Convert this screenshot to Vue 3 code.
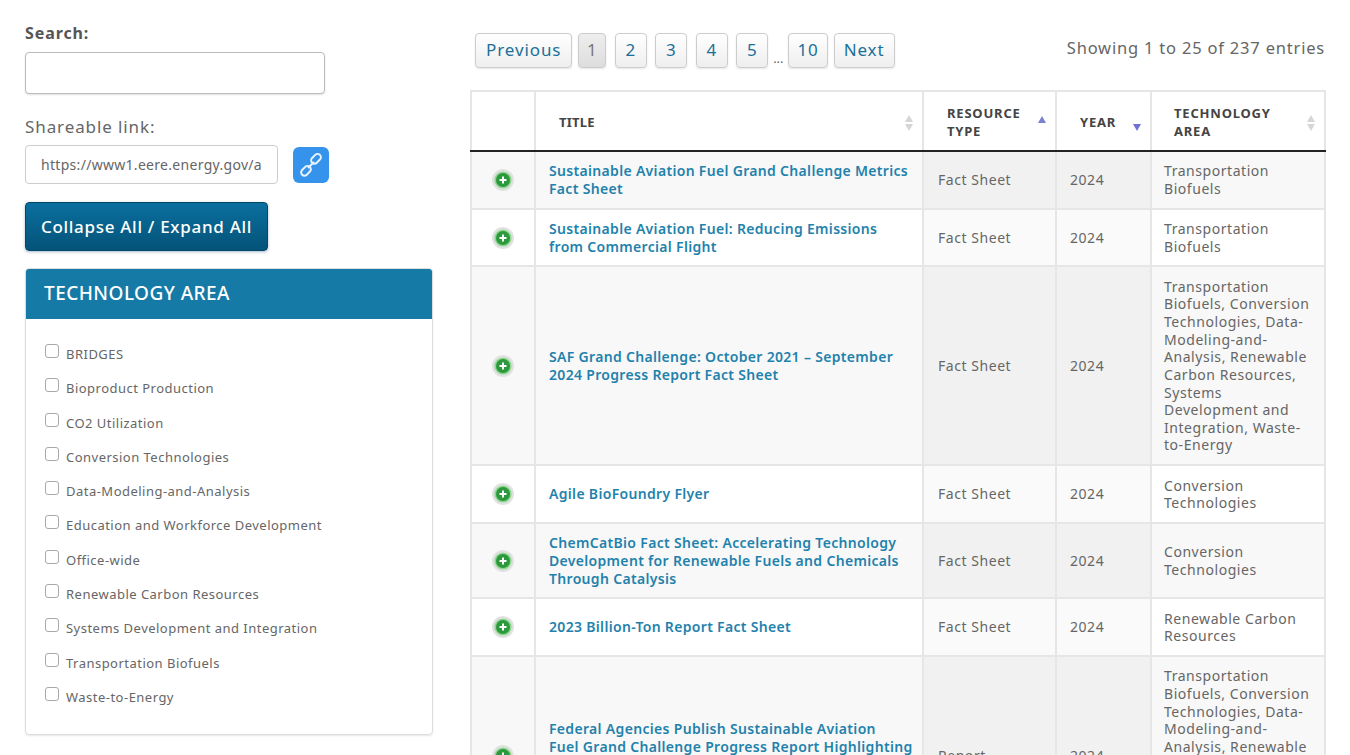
<template>
  <div class="page">
    <aside class="sidebar">
      <label class="search-label" for="search">Search:</label>
      <input id="search" class="search-input" type="text" />

      <label class="share-label" for="share">Shareable link:</label>
      <div class="share-row">
        <input id="share" class="share-input" type="text" value="https://www1.eere.energy.gov/a" readonly />
        <button class="share-button" aria-label="Copy link">
          <svg width="24" height="24" viewBox="0 0 24 24" fill="none" stroke="#e8f3ff" stroke-width="2">
            <rect x="11.5" y="2.5" width="11" height="6.6" rx="3.3" transform="rotate(-45 17 5.8)" />
            <rect x="1.5" y="14.5" width="11" height="6.6" rx="3.3" transform="rotate(-45 7 17.8)" />
            <path d="M9 15l6-6" />
          </svg>
        </button>
      </div>

      <button class="collapse-button">Collapse All / Expand All</button>

      <section class="panel">
        <h3 class="panel-heading">TECHNOLOGY AREA</h3>
        <ul class="filter-list">
          <li v-for="area in areas" :key="area" class="filter-item">
            <input type="checkbox" class="filter-check" />
            <span>{{ area }}</span>
          </li>
        </ul>
      </section>
    </aside>

    <main class="content">
      <div class="toolbar">
        <nav class="pager">
          <a class="page-btn prev">Previous</a>
          <a class="page-btn current">1</a>
          <a class="page-btn">2</a>
          <a class="page-btn">3</a>
          <a class="page-btn">4</a>
          <a class="page-btn">5</a>
          <span class="dots">...</span>
          <a class="page-btn ten">10</a>
          <a class="page-btn next">Next</a>
        </nav>
        <p class="info">Showing 1 to 25 of 237 entries</p>
      </div>

      <table class="results">
        <colgroup>
          <col style="width: 64px" />
          <col style="width: 388px" />
          <col style="width: 133px" />
          <col style="width: 95px" />
          <col style="width: 174px" />
        </colgroup>
        <thead>
          <tr>
            <th></th>
            <th class="th-title">
              <div class="th-inner">
                <span>TITLE</span>
                <svg class="sort" width="10" height="18" viewBox="0 0 10 18">
                  <path d="M5 1l4 7H1z" fill="#d6d6d6" />
                  <path d="M5 17l4-7H1z" fill="#d6d6d6" />
                </svg>
              </div>
            </th>
            <th>
              <div class="th-inner">
                <span>RESOURCE TYPE</span>
                <svg class="sort up" width="10" height="9" viewBox="0 0 10 9">
                  <path d="M5 1l4 7H1z" fill="#7b7fd0" />
                </svg>
              </div>
            </th>
            <th>
              <div class="th-inner">
                <span>YEAR</span>
                <svg class="sort down" width="10" height="9" viewBox="0 0 10 9">
                  <path d="M5 8l4-7H1z" fill="#6f73d6" />
                </svg>
              </div>
            </th>
            <th class="th-area">
              <div class="th-inner">
                <span>TECHNOLOGY AREA</span>
                <svg class="sort" width="10" height="18" viewBox="0 0 10 18">
                  <path d="M5 1l4 7H1z" fill="#d6d6d6" />
                  <path d="M5 17l4-7H1z" fill="#d6d6d6" />
                </svg>
              </div>
            </th>
          </tr>
        </thead>
        <tbody>
          <tr v-for="(row, i) in rows" :key="i" :class="i % 2 === 0 ? 'odd' : 'even'">
            <td class="td-icon">
              <svg width="24" height="24" viewBox="0 0 24 24">
                <circle cx="12" cy="12" r="11" fill="#dfe3df" />
                <circle cx="12" cy="12" r="8.6" fill="#8fd48f" />
                <circle cx="12" cy="12" r="7" fill="#2c9a3c" />
                <path d="M12 8.5v7M8.5 12h7" stroke="#fff" stroke-width="2" />
              </svg>
            </td>
            <td class="td-title"><a>{{ row.title }}</a></td>
            <td class="sorted td-type">{{ row.type }}</td>
            <td class="sorted">{{ row.year }}</td>
            <td class="td-area">{{ row.area }}</td>
          </tr>
        </tbody>
      </table>
    </main>
  </div>
</template>

<script setup>
const areas = [
  "BRIDGES",
  "Bioproduct Production",
  "CO2 Utilization",
  "Conversion Technologies",
  "Data-Modeling-and-Analysis",
  "Education and Workforce Development",
  "Office-wide",
  "Renewable Carbon Resources",
  "Systems Development and Integration",
  "Transportation Biofuels",
  "Waste-to-Energy",
];

const longArea =
  "Transportation Biofuels, Conversion Technologies, Data-Modeling-and-Analysis, Renewable Carbon Resources, Systems Development and Integration, Waste-to-Energy";

const rows = [
  { title: "Sustainable Aviation Fuel Grand Challenge Metrics Fact Sheet", type: "Fact Sheet", year: "2024", area: "Transportation Biofuels" },
  { title: "Sustainable Aviation Fuel: Reducing Emissions\nfrom Commercial Flight", type: "Fact Sheet", year: "2024", area: "Transportation Biofuels" },
  { title: "SAF Grand Challenge: October 2021 – September 2024 Progress Report Fact Sheet", type: "Fact Sheet", year: "2024", area: longArea },
  { title: "Agile BioFoundry Flyer", type: "Fact Sheet", year: "2024", area: "Conversion Technologies" },
  { title: "ChemCatBio Fact Sheet: Accelerating Technology Development for Renewable Fuels and Chemicals Through Catalysis", type: "Fact Sheet", year: "2024", area: "Conversion Technologies" },
  { title: "2023 Billion-Ton Report Fact Sheet", type: "Fact Sheet", year: "2024", area: "Renewable Carbon Resources" },
  { title: "Federal Agencies Publish Sustainable Aviation\nFuel Grand Challenge Progress Report Highlighting\nSignificant Progress Toward 2030\nGoals", type: "Report", year: "2024", area: longArea },
];
</script>

<style>
html,
body {
  height: 100%;
  overflow: hidden;
  background: #fff;
}
</style>

<style scoped>
.page {
  display: flex;
  gap: 38px;
  padding: 0 25px;
  font-family: "Noto Sans", sans-serif;
  color: #666;
}

.sidebar {
  width: 408px;
  flex-shrink: 0;
  display: flex;
  flex-direction: column;
  align-items: flex-start;
  padding-top: 24px;
}

.search-label {
  font-size: 16px;
  line-height: 19px;
  font-weight: 700;
  letter-spacing: 0.9px;
  color: #555;
}

.search-input {
  width: 300px;
  height: 42px;
  margin-top: 9px;
  box-sizing: border-box;
  border: 1px solid #bbb;
  border-radius: 4px;
  box-shadow: 0 1px 2px rgba(0, 0, 0, 0.12);
}

.share-label {
  margin-top: 23px;
  font-size: 17px;
  line-height: 20px;
  letter-spacing: 0.9px;
  color: #666;
}

.share-row {
  display: flex;
  align-items: center;
  gap: 15px;
  margin-top: 8px;
}

.share-input {
  width: 253px;
  height: 39px;
  box-sizing: border-box;
  padding: 0 15px;
  border: 1px solid #ccc;
  border-radius: 4px;
  font-family: inherit;
  font-size: 14px;
  letter-spacing: 0.3px;
  color: #666;
  outline: none;
}

.share-button {
  width: 36px;
  height: 36px;
  padding: 0;
  display: flex;
  align-items: center;
  justify-content: center;
  border: none;
  border-radius: 6px;
  background: #3593ec;
}

.collapse-button {
  width: 243px;
  height: 49px;
  margin-top: 18px;
  border: 1px solid #034868;
  border-radius: 4px;
  background: linear-gradient(#0b6f9e, #045379);
  color: #fff;
  font-family: inherit;
  font-size: 17px;
  font-weight: 500;
  letter-spacing: 0.7px;
  box-shadow: 0 1px 3px rgba(0, 60, 100, 0.35);
}

.panel {
  width: 100%;
  margin-top: 17px;
  box-sizing: border-box;
  border: 1px solid #ddd;
  border-radius: 4px;
  box-shadow: 0 1px 2px rgba(0, 0, 0, 0.1);
}

.panel-heading {
  margin: 0;
  height: 50px;
  box-sizing: border-box;
  padding: 0 18px 2px;
  display: flex;
  align-items: center;
  background: #157aa6;
  border-radius: 3px 3px 0 0;
  color: #fff;
  font-size: 19px;
  font-weight: 500;
  letter-spacing: 0.45px;
}

.filter-list {
  list-style: none;
  margin: 0;
  padding: 24px 19px 28px;
  display: flex;
  flex-direction: column;
  gap: 14.3px;
}

.filter-item {
  display: flex;
  gap: 7px;
  height: 20px;
  font-size: 13px;
  line-height: 20px;
  letter-spacing: 0.48px;
  color: #666;
}

.filter-check {
  appearance: none;
  width: 14px;
  height: 14px;
  margin: 1px 0 0;
  border: 1px solid #aaa;
  border-radius: 3px;
  background: #fff;
}

.filter-item span {
  padding-top: 1px;
}

.content {
  flex: 1;
  min-width: 0;
}

.toolbar {
  height: 90px;
  display: flex;
  justify-content: space-between;
  align-items: flex-start;
  box-sizing: border-box;
  padding-top: 33px;
}

.pager {
  display: flex;
  align-items: flex-start;
  gap: 8.5px;
  margin-left: 4px;
}

.page-btn {
  height: 35px;
  min-width: 32px;
  box-sizing: border-box;
  padding: 0 9px 2px;
  display: flex;
  align-items: center;
  justify-content: center;
  border: 1px solid #ccc;
  border-radius: 4px;
  background: linear-gradient(#fff, #eee);
  color: #1b7099;
  font-size: 17px;
  letter-spacing: 0.9px;
  box-shadow: 0 1px 2px rgba(0, 0, 0, 0.1);
}

.page-btn.prev {
  padding: 0 10px 2px;
}

.page-btn.ten {
  padding: 0 8px 2px;
}

.page-btn.current {
  min-width: 28px;
  width: 28px;
  margin-left: -2.5px;
  padding: 0 0 2px;
  background: linear-gradient(#eee, #ddd);
  color: #777;
}

.page-btn.next {
  margin-left: -2.5px;
}

.dots {
  margin: 0 -8.5px;
  padding-top: 16px;
  width: 20px;
  text-align: center;
  font-size: 13px;
  line-height: 18px;
}

.info {
  margin: 5px 0 0;
  font-size: 16.5px;
  line-height: 20px;
  letter-spacing: 0.8px;
  color: #666;
}

.results {
  width: 854px;
  margin-left: -1px;
  table-layout: fixed;
  border-collapse: collapse;
  font-size: 14px;
  line-height: 17.65px;
  letter-spacing: 0.55px;
}

.results th,
.results td {
  border: 2px solid #e6e6e6;
  padding: 10.2px 12px 10.2px 13px;
  vertical-align: middle;
  text-align: left;
}

.results th {
  padding: 12px 8px 8px 23px;
  height: 38px;
  background: #fff;
  color: #444;
  font-size: 13px;
  font-weight: 700;
  letter-spacing: 0.8px;
  border-bottom: 2px solid #222;
}

.results .th-title {
  letter-spacing: 0.2px;
}

.results .th-area {
  padding-left: 22px;
}

.th-inner {
  display: flex;
  align-items: center;
  justify-content: space-between;
}

.th-inner span {
  flex: 1;
  min-width: 0;
}

.sort {
  flex-shrink: 0;
}

.sort.up {
  margin-bottom: 8px;
}

.sort.down {
  margin-top: 8px;
}

.odd td {
  background: #f8f8f8;
}

.even td {
  background: #fff;
}

.odd td.sorted {
  background: #f1f1f1;
}

.even td.sorted {
  background: #fafafa;
}

.results .td-icon {
  padding: 0;
}

.td-icon svg {
  display: block;
  margin: 0 auto;
}

.results .td-title {
  padding-right: 6px;
  white-space: pre-line;
}

.results .td-type {
  padding-left: 14px;
}

.results .td-area {
  padding-left: 12px;
}

.td-title a {
  color: #1f82ac;
  font-weight: 600;
  letter-spacing: 0.32px;
}
</style>
